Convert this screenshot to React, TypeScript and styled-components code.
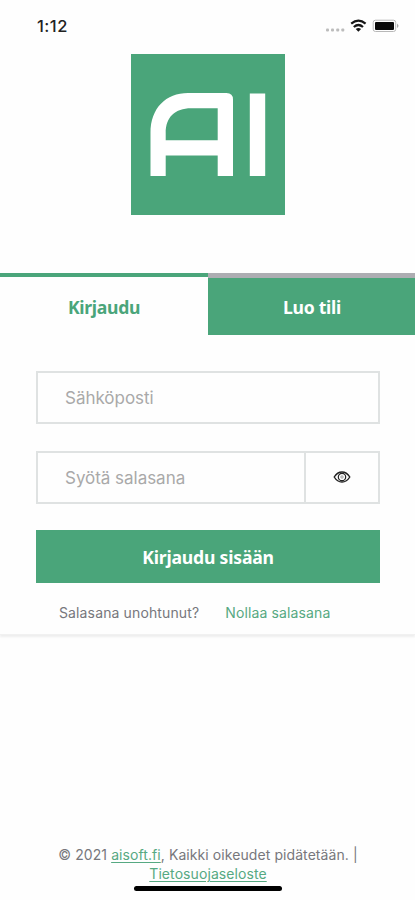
import React from "react";
import styled, { createGlobalStyle } from "styled-components";

const green = "#4aa57a";

const GlobalStyle = createGlobalStyle`
  * { box-sizing: border-box; }
  body { margin: 0; background: #fefefe; font-family: Inter, "Liberation Sans", sans-serif; }
`;

const Screen = styled.div`
  display: flex;
  flex-direction: column;
  width: 415px;
  height: 900px;
  overflow: hidden;
`;

const StatusBar = styled.header`
  display: flex;
  align-items: center;
  justify-content: space-between;
  height: 54px;
  padding: 0 15px 2px 37px;
`;

const Clock = styled.span`
  font-size: 16.5px;
  font-weight: 500;
  letter-spacing: 0.5px;
  color: #222;
`;

const LogoArea = styled.div`
  display: flex;
  justify-content: center;
  height: 219px;
  padding-left: 1px;
`;

const Tabs = styled.nav`
  display: grid;
  grid-template-columns: 208px 207px;
  height: 62px;
`;

const Tab = styled.button<{ $active?: boolean }>`
  border: 0;
  border-top: ${(p) => (p.$active ? `4px solid ${green}` : "5px solid #adadb2")};
  padding: ${(p) => (p.$active ? "1px 0 0" : "0 0 0 1px")};
  background: ${(p) => (p.$active ? "#fefefe" : green)};
  color: ${(p) => (p.$active ? green : "#fff")};
  font: 700 17.6px/24px "Noto Sans", sans-serif;
  letter-spacing: -0.3px;
`;

const Panel = styled.form`
  display: flex;
  flex-direction: column;
  height: 300px;
  padding: 36px 35px 0 36px;
  border-bottom: 1px solid #f1f1f1;
  box-shadow: 0 2px 2px #eee;
`;

const Field = styled.label<{ $last?: boolean }>`
  display: flex;
  height: 53px;
  margin-bottom: ${(p) => (p.$last ? 26 : 27)}px;
  border: 2px solid #dfe2e2;
`;

const Input = styled.input`
  flex: 1;
  min-width: 0;
  border: 0;
  outline: 0;
  padding: 0 0 0 27px;
  background: transparent;
  font: 400 17px Inter, sans-serif;
  letter-spacing: -0.03px;
  &::placeholder { color: #a9a9a9; opacity: 1; }
`;

const RevealButton = styled.button`
  display: flex;
  align-items: center;
  justify-content: center;
  width: 74px;
  padding: 0 0 1px;
  border: 0;
  border-left: 2px solid #dfe2e2;
  background: transparent;
`;

const Submit = styled.button`
  height: 53px;
  flex: none;
  border: 0;
  padding: 0;
  background: ${green};
  color: #fff;
  font: 700 17.6px "Noto Sans", sans-serif;
  letter-spacing: -0.2px;
`;

const Recovery = styled.div`
  display: flex;
  gap: 26px;
  padding: 20px 0 0 23px;
  font-size: 14px;
  line-height: 20px;
  letter-spacing: 0.13px;
  color: #77777c;
`;

const Link = styled.a<{ $underlined?: boolean }>`
  color: #56a982;
  text-decoration: ${(p) => (p.$underlined ? "underline" : "none")};
  text-underline-offset: 2px;
`;

const Footer = styled.footer`
  display: flex;
  flex-direction: column;
  align-items: center;
  margin-top: auto;
  height: 55px;
  padding-left: 1px;
  font-size: 14px;
  line-height: 19px;
  letter-spacing: 0.08px;
  color: #77777c;
`;

const HomeBar = styled.div`
  width: 148px;
  height: 5px;
  margin-top: 3px;
  border-radius: 3px;
  background: #000;
`;

const StatusIcons = () => (
  <svg width="76" height="20" viewBox="324 16 76 20">
    <g fill="#bcbcbc">
      <rect x="326" y="28.5" width="3" height="3" rx="1" />
      <rect x="331" y="28.5" width="3" height="3" rx="1" />
      <rect x="336.2" y="28.5" width="3" height="3" rx="1" />
      <rect x="341.3" y="28.5" width="3" height="3" rx="1" />
    </g>
    <g fill="none" stroke="#151515" strokeWidth="2.2">
      <path d="M351.2 23.6q7.2-6 14.4 0M353.8 27q4.6-4 9.2 0" />
    </g>
    <path d="M355.7 29q2.7-2 5.4 0l-2.7 2.7z" fill="#151515" />
    <rect x="373.2" y="20.2" width="22.5" height="11.3" rx="2.2" fill="none" stroke="#b8b8b8" />
    <rect x="375" y="22" width="19" height="8" rx="1" fill="#090909" />
    <path d="M397 23.5v4.5q3-2.2 0-4.5" fill="#aaa" />
  </svg>
);

const Logo = () => (
  <svg width="154" height="161" viewBox="131 54 154 161" role="img" aria-label="AI">
    <rect x="131" y="54" width="154" height="161" fill={green} />
    <path
      fill="#fff"
      fillRule="evenodd"
      d="M150.5 176v-43C150.5 108 166 93 188 93h38.5q6.5 0 6.5 6.5V176h-15.3v-20.5h-52V176zM165.7 140.3h52V108.2H191C175 108.2 165.7 117 165.7 133z"
    />
    <rect x="249.8" y="93.5" width="15.4" height="82.5" fill="#fff" />
  </svg>
);

const EyeIcon = () => (
  <svg width="18" height="14" viewBox="0 0 18 14" fill="none" stroke="#222" strokeWidth="1.4">
    <path d="M1.2 7Q4.3 2 9 2t7.8 5q-3.1 5-7.8 5T1.2 7z" />
    <circle cx="9" cy="7" r="3.7" strokeWidth="1.2" />
    <circle cx="9" cy="7" r="1.2" stroke="#888" strokeWidth=".8" />
  </svg>
);

export default function App() {
  return (
    <Screen>
      <GlobalStyle />
      <StatusBar>
        <Clock>1:12</Clock>
        <StatusIcons />
      </StatusBar>
      <LogoArea>
        <Logo />
      </LogoArea>
      <Tabs>
        <Tab $active>Kirjaudu</Tab>
        <Tab>Luo tili</Tab>
      </Tabs>
      <Panel>
        <Field>
          <Input type="email" placeholder="Sähköposti" />
        </Field>
        <Field $last>
          <Input type="password" placeholder="Syötä salasana" />
          <RevealButton type="button">
            <EyeIcon />
          </RevealButton>
        </Field>
        <Submit type="button">Kirjaudu sisään</Submit>
        <Recovery>
          <span>Salasana unohtunut?</span>
          <Link>Nollaa salasana</Link>
        </Recovery>
      </Panel>
      <Footer>
        <span>
          © 2021 <Link $underlined>aisoft.fi</Link>, Kaikki oikeudet pidätetään. |
        </span>
        <Link $underlined>Tietosuojaseloste</Link>
        <HomeBar />
      </Footer>
    </Screen>
  );
}
